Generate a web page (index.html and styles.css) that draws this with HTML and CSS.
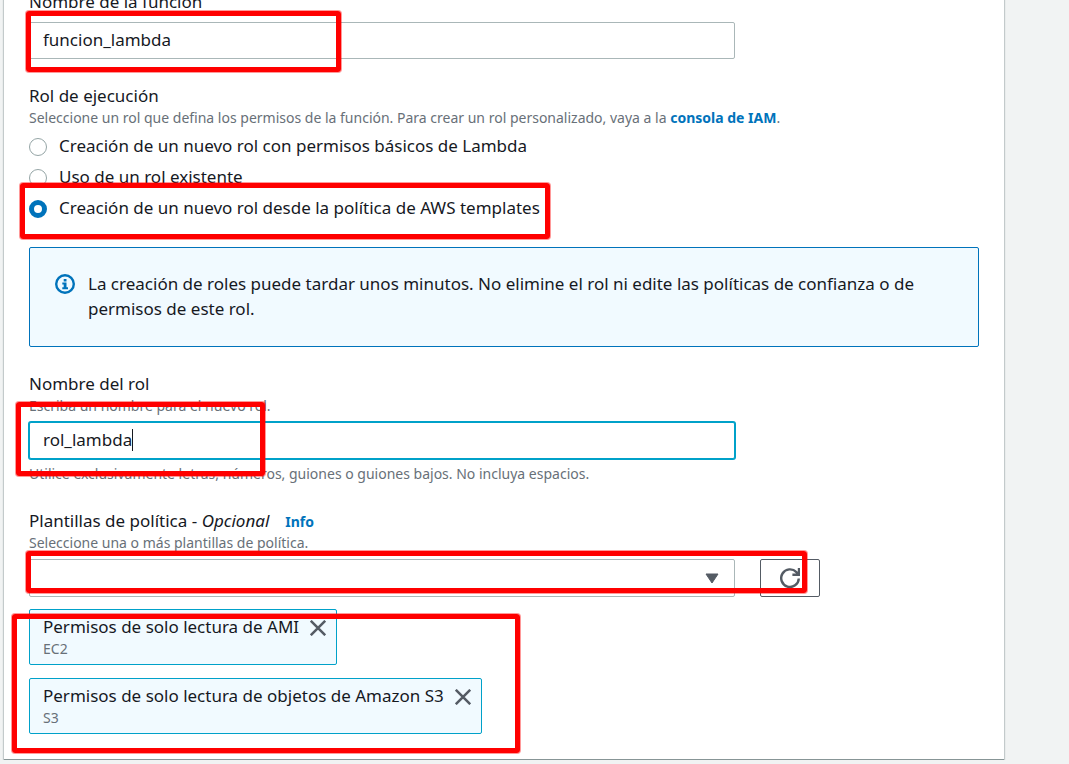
FILE: index.html
```html
<!DOCTYPE html>
<html lang="es">
<head>
<meta charset="utf-8">
<meta name="viewport" content="width=device-width, initial-scale=1">
<title>Crear función</title>
<link rel="stylesheet" href="styles.css">
</head>
<body>
<main class="panel">
  <form class="form">
    <section class="field function-name">
      <label class="label" for="fn-name">Nombre de la función</label>
      <input class="input" id="fn-name" type="text" value="funcion_lambda">
      <span class="mark mark-function"></span>
    </section>

    <fieldset class="field roles">
      <legend class="label">Rol de ejecución</legend>
      <p class="hint">Seleccione un rol que defina los permisos de la función. Para crear un rol personalizado, vaya a la <a class="link" href="#iam">consola de IAM</a>.</p>
      <div class="options">
        <label class="option"><input class="radio" type="radio" name="role"><span>Creación de un nuevo rol con permisos básicos de Lambda</span></label>
        <label class="option"><input class="radio" type="radio" name="role"><span>Uso de un rol existente</span></label>
        <label class="option"><input class="radio" type="radio" name="role" checked><span>Creación de un nuevo rol desde la política de AWS templates</span></label>
        <span class="mark mark-role"></span>
      </div>
    </fieldset>

    <div class="alert">
      <svg class="alert-icon" viewBox="0 0 20 20" aria-hidden="true">
        <circle cx="10" cy="10" r="8.8" fill="none" stroke="currentColor" stroke-width="2.4"/>
        <path d="M8.7 5h2.8v2.4H8.7zM7.3 8.4h4.2v4.8H13v2H7.3v-2h1.4v-2.8H7.3z" fill="currentColor"/>
      </svg>
      <p class="alert-text">La creación de roles puede tardar unos minutos. No elimine el rol ni edite las políticas de confianza o de permisos de este rol.</p>
    </div>

    <section class="field role-name">
      <label class="label" for="role-name">Nombre del rol</label>
      <p class="hint">Escriba un nombre para el nuevo rol.</p>
      <div class="input-wrap">
        <input class="input input-active" id="role-name" type="text" value="rol_lambda">
        <span class="caret"></span>
      </div>
      <p class="hint">Utilice exclusivamente letras, números, guiones o guiones bajos. No incluya espacios.</p>
      <span class="mark mark-role-name"></span>
    </section>

    <section class="field templates">
      <div class="label-row">
        <label class="label" for="template">Plantillas de política - <em>Opcional</em></label>
        <a class="link info" href="#info">Info</a>
      </div>
      <p class="hint">Seleccione una o más plantillas de política.</p>
      <div class="select-row">
        <div class="select-wrap">
          <select class="select" id="template"><option></option></select>
          <svg class="arrow" viewBox="0 0 14 11" aria-hidden="true"><path d="M1 1h12L7 10z" fill="currentColor" stroke="currentColor" stroke-width="1" stroke-linejoin="round"/></svg>
        </div>
        <button class="refresh" type="button" aria-label="Actualizar">
          <svg class="refresh-icon" viewBox="0 0 20 20" aria-hidden="true"><path d="M18.8 10.5A8.8 8.8 0 1 1 16.4 4.1L18.5 6.2M19 0v6.8h-6.6" fill="none" stroke="currentColor" stroke-width="2.4"/></svg>
        </button>
      </div>
      <ul class="tokens">
        <li class="token">
          <div><div class="token-name">Permisos de solo lectura de AMI</div><div class="hint">EC2</div></div>
          <button class="close" type="button" aria-label="Quitar AMI"><svg class="close-icon" viewBox="0 0 16 16" aria-hidden="true"><path d="M.8.8l14.4 14.4M15.2.8L.8 15.2" stroke="currentColor" stroke-width="2.5"/></svg></button>
        </li>
        <li class="token">
          <div><div class="token-name">Permisos de solo lectura de objetos de Amazon S3</div><div class="hint">S3</div></div>
          <button class="close" type="button" aria-label="Quitar S3"><svg class="close-icon" viewBox="0 0 16 16" aria-hidden="true"><path d="M.8.8l14.4 14.4M15.2.8L.8 15.2" stroke="currentColor" stroke-width="2.5"/></svg></button>
        </li>
      </ul>
      <span class="mark mark-select"></span>
      <span class="mark mark-tokens"></span>
    </section>
  </form>
</main>
</body>
</html>
```
FILE: styles.css
```css
* { box-sizing: border-box; }

body {
  margin: 0;
  background: #f1f3f3;
  color: #16191f;
  font: 17px/22px "Noto Sans", sans-serif;
  overflow: hidden;
}

p, ul, fieldset { margin: 0; padding: 0; border: 0; }

.panel {
  margin: -9px 65px 0 4px;
  padding: 0 25px 25px;
  border-bottom: 1px solid #879596;
  background: #fff;
  box-shadow: 0 0 1px 1px #c3cacb;
}

.field { position: relative; min-width: 0; }
.label { display: block; padding: 0; }
.hint { color: #687078; font-size: 14px; }
.link { color: #0073bb; font-size: 14px; font-weight: 700; text-decoration: none; }

.input, .select {
  display: block;
  width: 100%;
  height: 37px;
  padding: 0 13px 2px;
  border: 1px solid #aab7b8;
  border-radius: 2px;
  background: #fff;
  color: inherit;
  font: inherit;
  outline: none;
}

.function-name .input { width: 74.3%; margin-top: 9px; }

.roles { margin-top: 26px; }
.options { position: relative; padding-top: 2px; }
.option { display: flex; align-items: center; gap: 12px; height: 31px; }
.option span { padding-bottom: 2px; }
.radio {
  appearance: none;
  flex: none;
  width: 18px;
  height: 18px;
  margin: 0;
  border: 1px solid #95a5a6;
  border-radius: 50%;
  background: #fff;
}
.radio:checked { border: 5px solid #0073bb; }

.alert {
  display: flex;
  gap: 13px;
  min-height: 100px;
  margin-top: 23px;
  padding: 23px 25px;
  border: 1px solid #0073bb;
  border-radius: 2px;
  background: #f1faff;
}
.alert-icon { flex: none; width: 20px; height: 20px; margin-top: 3px; color: #0073bb; }
.alert-text { line-height: 25px; max-width: 840px; }

.role-name { margin-top: 26px; }
.input-wrap { position: relative; width: 74.3%; margin: 5px 0 4px; }
.input-active { border-color: #00a1c9; box-shadow: 0 0 0 1px #00a1c9; }
.caret { position: absolute; left: 103px; top: 7px; width: 1px; height: 22px; background: #16191f; }

.templates { margin-top: 25px; }
.label-row { display: flex; align-items: baseline; gap: 16px; height: 22px; }
.select-row { display: flex; gap: 25px; margin-top: 5px; }
.select-wrap { position: relative; width: 74.3%; }
.select { height: 38px; appearance: none; }
.arrow { position: absolute; right: 16px; top: 14px; width: 14px; height: 11px; color: #545b64; pointer-events: none; }

.refresh {
  display: flex;
  align-items: center;
  justify-content: center;
  width: 60px;
  height: 38px;
  padding: 0;
  border: 1px solid #545b64;
  border-radius: 2px;
  background: #fff;
  color: #545b64;
}
.refresh-icon { width: 20px; height: 20px; }

.tokens {
  display: flex;
  flex-direction: column;
  align-items: flex-start;
  gap: 13px;
  margin-top: 12px;
  list-style: none;
}
.token {
  display: flex;
  align-items: flex-start;
  gap: 11px;
  height: 56px;
  padding: 6px 10px 4px 13px;
  border: 1px solid #00a1c9;
  border-radius: 2px;
  background: #f1faff;
}
.close { padding: 0; margin-top: 4px; border: 0; background: none; color: #545b64; }
.close-icon { display: block; width: 16px; height: 16px; }

.mark {
  position: absolute;
  border: 5px solid #f00;
  border-radius: 3px;
  box-shadow: 0 0 0 1px rgba(255, 0, 0, .4);
  pointer-events: none;
}
.mark-function { left: -3px; top: 20px; width: 315px; height: 61px; }
.mark-role { left: -9px; top: 54px; width: 530px; height: 56px; }
.mark-role-name { left: -13px; top: 29px; width: 249px; height: 74px; }
.mark-select { left: -3px; top: 41px; width: 781px; height: 42px; }
.mark-tokens { left: -17px; top: 104px; width: 508px; height: 139px; }
```
